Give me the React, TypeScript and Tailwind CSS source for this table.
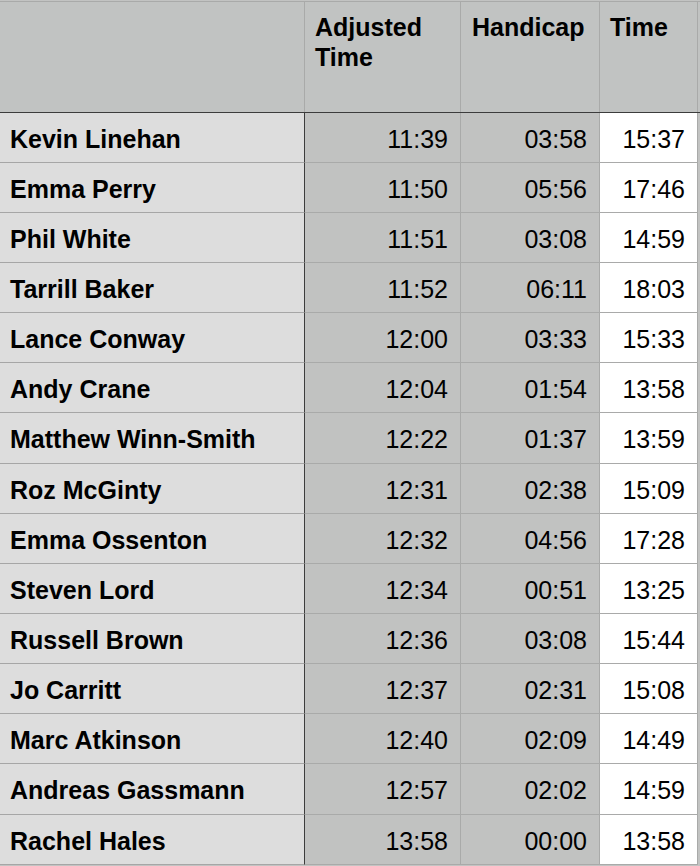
import React from 'react';

type Row = { name: string; adjusted: string; handicap: string; time: string };

const rows: Row[] = [
    { name: 'Kevin Linehan', adjusted: '11:39', handicap: '03:58', time: '15:37' },
    { name: 'Emma Perry', adjusted: '11:50', handicap: '05:56', time: '17:46' },
    { name: 'Phil White', adjusted: '11:51', handicap: '03:08', time: '14:59' },
    { name: 'Tarrill Baker', adjusted: '11:52', handicap: '06:11', time: '18:03' },
    { name: 'Lance Conway', adjusted: '12:00', handicap: '03:33', time: '15:33' },
    { name: 'Andy Crane', adjusted: '12:04', handicap: '01:54', time: '13:58' },
    { name: 'Matthew Winn-Smith', adjusted: '12:22', handicap: '01:37', time: '13:59' },
    { name: 'Roz McGinty', adjusted: '12:31', handicap: '02:38', time: '15:09' },
    { name: 'Emma Ossenton', adjusted: '12:32', handicap: '04:56', time: '17:28' },
    { name: 'Steven Lord', adjusted: '12:34', handicap: '00:51', time: '13:25' },
    { name: 'Russell Brown', adjusted: '12:36', handicap: '03:08', time: '15:44' },
    { name: 'Jo Carritt', adjusted: '12:37', handicap: '02:31', time: '15:08' },
    { name: 'Marc Atkinson', adjusted: '12:40', handicap: '02:09', time: '14:49' },
    { name: 'Andreas Gassmann', adjusted: '12:57', handicap: '02:02', time: '14:59' },
    { name: 'Rachel Hales', adjusted: '13:58', handicap: '00:00', time: '13:58' },
];

const App = () => {
    return (
        <div className="min-h-screen w-[700px] bg-[#c2c3c2] font-['Liberation_Sans',Arial,sans-serif] text-[25px] text-black">
            {/* Header */}
            <div className="pt-px">
                <div className="grid h-[112px] grid-cols-[305px_156px_139px_98px] border-t border-b border-t-[#a9aaa9] border-b-[#3c3c3c] bg-[#c1c3c2] font-bold leading-[30px]">
                    <div className="border-r border-[#a9aaa9]" />
                    <div className="border-r border-[#a9aaa9] pl-[10px] pt-[10px]">
                        Adjusted
                        <br />
                        Time
                    </div>
                    <div className="border-r border-[#a9aaa9] pl-[11px] pt-[10px]">Handicap</div>
                    <div className="border-r border-[#a9aaa9] pl-[10px] pt-[10px]">Time</div>
                </div>
            </div>

            {/* Rows */}
            {rows.map((r, i) => (
                <div
                    key={r.name}
                    className={`grid grid-cols-[305px_156px_139px_98px] ${i === 6 || i === 13 ? 'h-[51px]' : 'h-[50px]'}`}
                >
                    <div className="flex items-center border-r border-b border-r-[#3c3c3c] border-b-[#a6a6a6] bg-[#dddddd] pl-[10px] pt-[4px] font-bold">
                        {r.name}
                    </div>
                    <div className="flex items-center justify-end border-r border-b border-[#a9aaa9] bg-[#c1c2c1] pr-[12px] pt-[4px]">
                        {r.adjusted}
                    </div>
                    <div className="flex items-center justify-end border-r border-b border-[#a9aaa9] bg-[#c1c2c1] pr-[12px] pt-[4px]">
                        {r.handicap}
                    </div>
                    <div className="flex items-center justify-end border-r border-b border-[#a9aaa9] bg-white pr-[12px] pt-[4px]">
                        {r.time}
                    </div>
                </div>
            ))}
        </div>
    );
};

export default App;
